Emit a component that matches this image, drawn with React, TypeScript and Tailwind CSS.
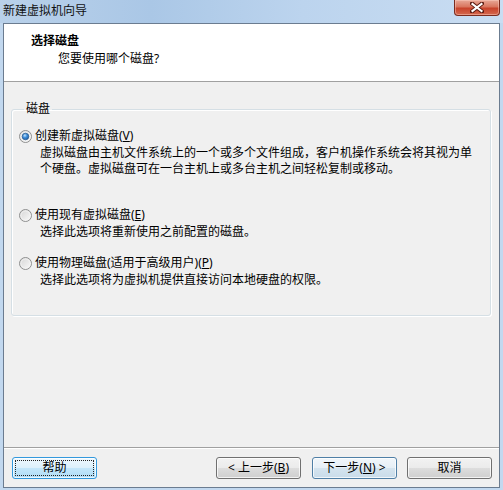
import React from 'react';

const Radio: React.FC<{ checked?: boolean }> = ({ checked }) => (
  <svg width="13" height="13" viewBox="0 0 13 13" className="shrink-0">
    <defs>
      <linearGradient id={checked ? 'rgOn' : 'rgOff'} x1="0" y1="0" x2="1" y2="1">
        <stop offset="0" stopColor="#d4d4d4" />
        <stop offset="1" stopColor="#fbfbfb" />
      </linearGradient>
      <radialGradient id="rdot" cx="0.4" cy="0.35" r="0.7">
        <stop offset="0" stopColor="#c6e4fb" />
        <stop offset="0.45" stopColor="#3e8fdb" />
        <stop offset="1" stopColor="#1d5a9e" />
      </radialGradient>
    </defs>
    <circle cx="6.5" cy="6.5" r="6" fill={`url(#${checked ? 'rgOn' : 'rgOff'})`} stroke="#8e8f8f" />
    <circle cx="6.5" cy="6.5" r="4.6" fill="none" stroke="#f4f4f4" strokeWidth="0.8" />
    {checked && <circle cx="6.5" cy="6.5" r="3.3" fill="url(#rdot)" stroke="#26598c" strokeWidth="0.7" />}
  </svg>
);

const btnBase =
  'h-[22px] w-[85px] rounded-[3px] border flex items-center justify-center leading-[16px] text-[12px] text-black shadow-[inset_0_0_0_1px_rgba(255,255,255,0.75)]';

const App: React.FC = () => {
  return (
    <div className="w-[503px] h-[490px] flex flex-col overflow-hidden bg-[#c2d8ef] text-black text-[12px] font-['Noto_Sans','Noto_Sans_CJK_SC',sans-serif]">
      {/* Title bar */}
      <div className="h-[23px] shrink-0 flex items-start justify-between pl-[3px] pr-[3px] bg-[linear-gradient(to_right,#b9d1ea,#aac7e6_30%,#bcd4ee_60%,#c9ddf2)]">
        <span className="mt-[3px] leading-[16px] text-[12px] text-[#111]">新建虚拟机向导</span>
        <div className="w-[46px] h-[16px] rounded-b-[4px] border border-t-0 border-[#7a2b1e] bg-[linear-gradient(to_bottom,#e8a897_0%,#d9765f_45%,#c8432b_55%,#d4694f_100%)] shadow-[inset_0_0_0_1px_rgba(255,210,200,0.45)] flex items-center justify-center">
          <svg width="14" height="11" viewBox="0 0 14 11">
            <path d="M2 1.5 L12 9.5 M12 1.5 L2 9.5" stroke="#5a1a10" strokeWidth="4" strokeLinecap="square" />
            <path d="M2.5 2 L11.5 9 M11.5 2 L2.5 9" stroke="#ffffff" strokeWidth="2.2" strokeLinecap="square" />
          </svg>
        </div>
      </div>

      {/* Client area */}
      <div className="flex-1 mx-[3px] mb-[2px] border border-[#6b7c90] bg-[#f0f0f0] flex flex-col">
        {/* Header */}
        <div className="h-[58px] shrink-0 bg-white border-b border-[#a0a0a0] pl-[27px] pt-[9px]">
          <div className="font-bold leading-[16px]">选择磁盘</div>
          <div className="mt-[2px] ml-[27px] leading-[16px]">您要使用哪个磁盘?</div>
        </div>

        {/* Body */}
        <div className="flex-1 pl-[7px] pr-[8px] pt-[19px]">
          <fieldset className="border border-[#d5dfe5] rounded-[3px] shadow-[inset_1px_1px_0_#ffffff,1px_1px_0_#ffffff] pl-[7px] pt-[11px] pb-[27px]">
            <legend className="ml-[5px] px-[2px] leading-[16px]">磁盘</legend>

            <div className="flex items-center gap-[3px] leading-[16px]">
              <Radio checked />
              <span>
                创建新虚拟磁盘(<span className="underline">V</span>)
              </span>
            </div>
            <div className="ml-[21px] mt-[1px] leading-[16px]">
              虚拟磁盘由主机文件系统上的一个或多个文件组成，客户机操作系统会将其视为单
              <br />
              个硬盘。虚拟磁盘可在一台主机上或多台主机之间轻松复制或移动。
            </div>

            <div className="mt-[30px] flex items-center gap-[3px] leading-[16px]">
              <Radio />
              <span>
                使用现有虚拟磁盘(<span className="underline">E</span>)
              </span>
            </div>
            <div className="ml-[21px] mt-[1px] leading-[16px]">选择此选项将重新使用之前配置的磁盘。</div>

            <div className="mt-[15px] flex items-center gap-[3px] leading-[16px]">
              <Radio />
              <span>
                使用物理磁盘(适用于高级用户)(<span className="underline">P</span>)
              </span>
            </div>
            <div className="ml-[21px] mt-[1px] leading-[16px]">选择此选项将为虚拟机提供直接访问本地硬盘的权限。</div>
          </fieldset>
        </div>

        {/* Footer */}
        <div className="shrink-0 border-t border-[#a0a0a0] shadow-[inset_0_1px_0_#ffffff] pt-[9px] pb-[8px] pl-[8px] pr-[7px] flex items-center">
          <button className={`${btnBase} border-[#3399dd] bg-[linear-gradient(to_bottom,#eef8fe_0%,#dcf1fc_50%,#c4e7fb_50%,#afdcf6_100%)] relative`}>
            <span className="absolute inset-[2px] border border-dotted border-[#222] rounded-[1px]" />
            <span className="relative">帮助</span>
          </button>
          <button className={`${btnBase} ml-auto border-[#707070] bg-[linear-gradient(to_bottom,#f2f2f2_0%,#ebebeb_50%,#dddddd_50%,#cfcfcf_100%)]`}>
            &lt; 上一步(<span className="underline">B</span>)
          </button>
          <button className={`${btnBase} ml-[11px] border-[#4f7fa6] bg-[linear-gradient(to_bottom,#f1f6fa_0%,#e6eff6_50%,#d5e4ef_50%,#c9dcea_100%)]`}>
            下一步(<span className="underline">N</span>) &gt;
          </button>
          <button className={`${btnBase} ml-[10px] border-[#707070] bg-[linear-gradient(to_bottom,#f2f2f2_0%,#ebebeb_50%,#dddddd_50%,#cfcfcf_100%)]`}>
            取消
          </button>
        </div>
      </div>
    </div>
  );
};

export default App;
